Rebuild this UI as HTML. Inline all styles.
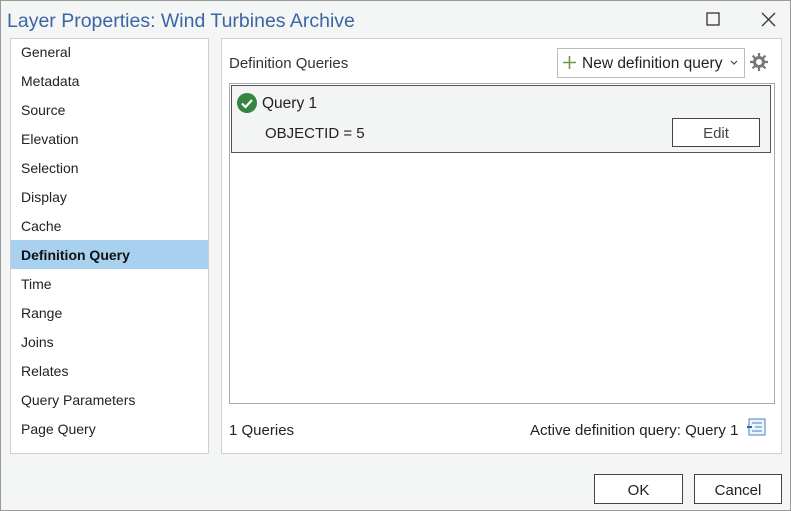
<!DOCTYPE html>
<html><head><meta charset="utf-8"><style>
*{box-sizing:border-box;margin:0;padding:0}
body{width:791px;height:511px;background:#f4f5f5;font-family:"Liberation Sans",sans-serif;font-size:14px;color:#222;position:relative;overflow:hidden}
.frame{position:absolute;left:0;top:0;width:791px;height:511px;border:1px solid #9a9a9a}
.abs{position:absolute}
.title{left:7px;top:10px;font-size:19.5px;color:#3a66a6}
.left{left:10px;top:38px;width:199px;height:416px;background:#fff;border:1px solid #cfcfcf}
.left div{height:29px;line-height:30px;padding-left:10px}
.left .sel{background:#a8d1f0;font-weight:bold;color:#111}
.right{left:221px;top:38px;width:561px;height:416px;background:#fff;border:1px solid #cfcfcf}
.btn{background:#fff;border:1px solid #444;text-align:center;font-size:15px}
.r{font-size:15px}
</style></head><body>
<div class="frame"></div>
<div class="abs title">Layer Properties: Wind Turbines Archive</div>
<svg class="abs" style="left:706px;top:12px" width="14" height="14"><rect x="1" y="1" width="12" height="12" fill="none" stroke="#333" stroke-width="1.3"/></svg>
<svg class="abs" style="left:761px;top:12px" width="15" height="15"><path d="M1 1L14 14M14 1L1 14" stroke="#333" stroke-width="1.3"/></svg>
<div class="abs left">
<div style="margin-top:-2px">General</div><div>Metadata</div><div>Source</div><div>Elevation</div><div>Selection</div><div>Display</div><div>Cache</div><div class="sel">Definition Query</div><div>Time</div><div>Range</div><div>Joins</div><div>Relates</div><div>Query Parameters</div><div>Page Query</div>
</div>
<div class="abs right"></div>
<div class="abs r" style="left:229px;top:55px;color:#333">Definition Queries</div>
<div class="abs" style="left:557px;top:48px;width:188px;height:30px;border:1px solid #bbb;background:#fff"></div>
<svg class="abs" style="left:563px;top:56px" width="13" height="13"><path d="M6.5 0V13M0 6.5H13" stroke="#6a9a4a" stroke-width="1.6"/></svg>
<div class="abs" style="left:582px;top:55px;font-size:15.5px">New definition query</div>
<svg class="abs" style="left:730px;top:60px" width="8" height="6"><path d="M1 1L4 4L7 1" stroke="#444" fill="none" stroke-width="1.2"/></svg>
<svg class="abs" style="left:749px;top:52px" width="20" height="20" viewBox="0 0 20 20"><g stroke="#777" stroke-width="2.2"><path d="M10 1V19M1 10H19M3.6 3.6L16.4 16.4M16.4 3.6L3.6 16.4"/></g><circle cx="10" cy="10" r="6" fill="#777"/><circle cx="10" cy="10" r="3" fill="#fff"/></svg>
<div class="abs" style="left:229px;top:83px;width:546px;height:321px;border:1px solid #aaa;background:#fff"></div>
<div class="abs" style="left:231px;top:85px;width:540px;height:68px;border:1px solid #555;background:#f3f4f4"></div>
<svg class="abs" style="left:237px;top:93px" width="20" height="20"><circle cx="10" cy="10" r="10" fill="#35843f"/><path d="M5 10.5L8.5 14L15 7" stroke="#fff" stroke-width="2.2" fill="none"/></svg>
<div class="abs" style="left:262px;top:95px;font-size:15.5px">Query 1</div>
<div class="abs r" style="left:265px;top:125px">OBJECTID = 5</div>
<div class="abs btn" style="left:672px;top:118px;width:88px;height:29px;line-height:29px;color:#444">Edit</div>
<div class="abs r" style="left:229px;top:422px">1 Queries</div>
<div class="abs r" style="left:530px;top:422px">Active definition query: Query 1</div>
<svg class="abs" style="left:746px;top:418px" width="20" height="18"><rect x="3" y="1" width="16" height="16" fill="#eef4fb" stroke="#4a7fc0"/><path d="M6 5H16M9 9H16M6 13H16" stroke="#4a7fc0"/><path d="M1 9L6 9" stroke="#2a66b0" stroke-width="2"/></svg>
<div class="abs btn" style="left:594px;top:474px;width:89px;height:30px;line-height:31px">OK</div>
<div class="abs btn" style="left:694px;top:474px;width:88px;height:30px;line-height:31px">Cancel</div>
</body></html>
